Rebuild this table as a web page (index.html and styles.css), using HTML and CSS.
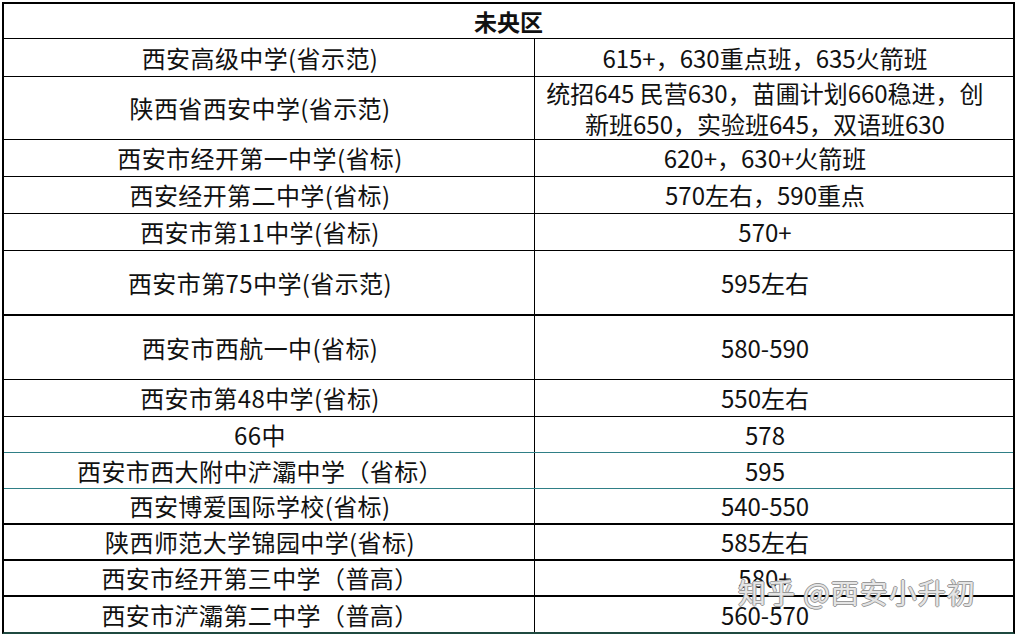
FILE: index.html
```html
<!DOCTYPE html>
<html lang="zh-CN">
<head>
<meta charset="utf-8">
<title>未央区</title>
<link rel="stylesheet" href="styles.css">
</head>
<body>
<div class="page">
  <div class="sheet">
    <div class="row head h34"><div class="cell title">未央区</div></div>
    <div class="row h37"><div class="cell">西安高级中学(省示范)</div><div class="cell">615+，630重点班，635火箭班</div></div>
    <div class="row h62"><div class="cell">陕西省西安中学(省示范)</div><div class="cell two">统招645 民营630，苗圃计划660稳进，创<br>新班650，实验班645，双语班630</div></div>
    <div class="row h36"><div class="cell">西安市经开第一中学(省标)</div><div class="cell">620+，630+火箭班</div></div>
    <div class="row h36"><div class="cell">西安经开第二中学(省标)</div><div class="cell">570左右，590重点</div></div>
    <div class="row h36"><div class="cell">西安市第11中学(省标)</div><div class="cell">570+</div></div>
    <div class="row h63 thick"><div class="cell">西安市第75中学(省示范)</div><div class="cell">595左右</div></div>
    <div class="row h63"><div class="cell">西安市西航一中(省标)</div><div class="cell">580-590</div></div>
    <div class="row h36"><div class="cell">西安市第48中学(省标)</div><div class="cell">550左右</div></div>
    <div class="row h35 tint"><div class="cell">66中</div><div class="cell">578</div></div>
    <div class="row h35 tint"><div class="cell">西安市西大附中浐灞中学（省标）</div><div class="cell">595</div></div>
    <div class="row h34 thick"><div class="cell">西安博爱国际学校(省标)</div><div class="cell">540-550</div></div>
    <div class="row h34 thick"><div class="cell">陕西师范大学锦园中学(省标)</div><div class="cell">585左右</div></div>
    <div class="row h34 thick"><div class="cell">西安市经开第三中学（普高）</div><div class="cell">580+</div></div>
    <div class="row h35 last"><div class="cell">西安市浐灞第二中学（普高）</div><div class="cell">560-570</div></div>
  </div>
  <div class="watermark">知乎 @西安小升初</div>
</div>
</body>
</html>
```

FILE: styles.css
```css
html, body {
  margin: 0;
  padding: 0;
  background: #ffffff;
}

.page {
  position: relative;
  width: 1016px;
  height: 634px;
  padding: 2px 0 0 2px;
  box-sizing: border-box;
  overflow: hidden;
  font-family: "Noto Sans CJK SC", "Noto Sans", sans-serif;
  color: #111;
}

.sheet {
  width: 1013px;
  box-sizing: border-box;
  border: 2px solid #000;
  border-bottom-color: #1f4a40;
}

.row {
  display: grid;
  grid-template-columns: 531px 1fr;
  border-bottom: 1px solid #000;
}

.row.thick {
  border-bottom-width: 2px;
}

.row.tint {
  border-bottom-color: #2f7f86;
}

.row.last {
  border-bottom: none;
}

.row.head {
  grid-template-columns: 1fr;
}

.h34 { height: 34px; }
.h35 { height: 35px; }
.h36 { height: 36px; }
.h37 { height: 37px; }
.h62 { height: 62px; }
.h63 { height: 63px; }

.cell {
  display: flex;
  align-items: center;
  justify-content: center;
  text-align: center;
  font-size: 24px;
  line-height: 30px;
  padding-right: 18px;
  white-space: nowrap;
}

.row > .cell:first-child {
  border-right: 1px solid #000;
  letter-spacing: 0.4px;
}

.row.head > .cell:first-child {
  border-right: none;
  letter-spacing: 0;
}

.cell.title {
  font-weight: bold;
  padding-right: 0;
  font-size: 23px;
}

.cell.two {
  line-height: 31px;
}

.watermark {
  position: absolute;
  left: 738px;
  top: 577px;
  font-size: 28px;
  line-height: 30px;
  letter-spacing: 1px;
  color: rgba(255, 255, 255, 0.75);
  text-shadow:
    1px 0 0 #9a9a9a,
    -1px 0 0 #9a9a9a,
    0 1px 0 #9a9a9a,
    0 -1px 0 #9a9a9a;
  white-space: nowrap;
}
```
